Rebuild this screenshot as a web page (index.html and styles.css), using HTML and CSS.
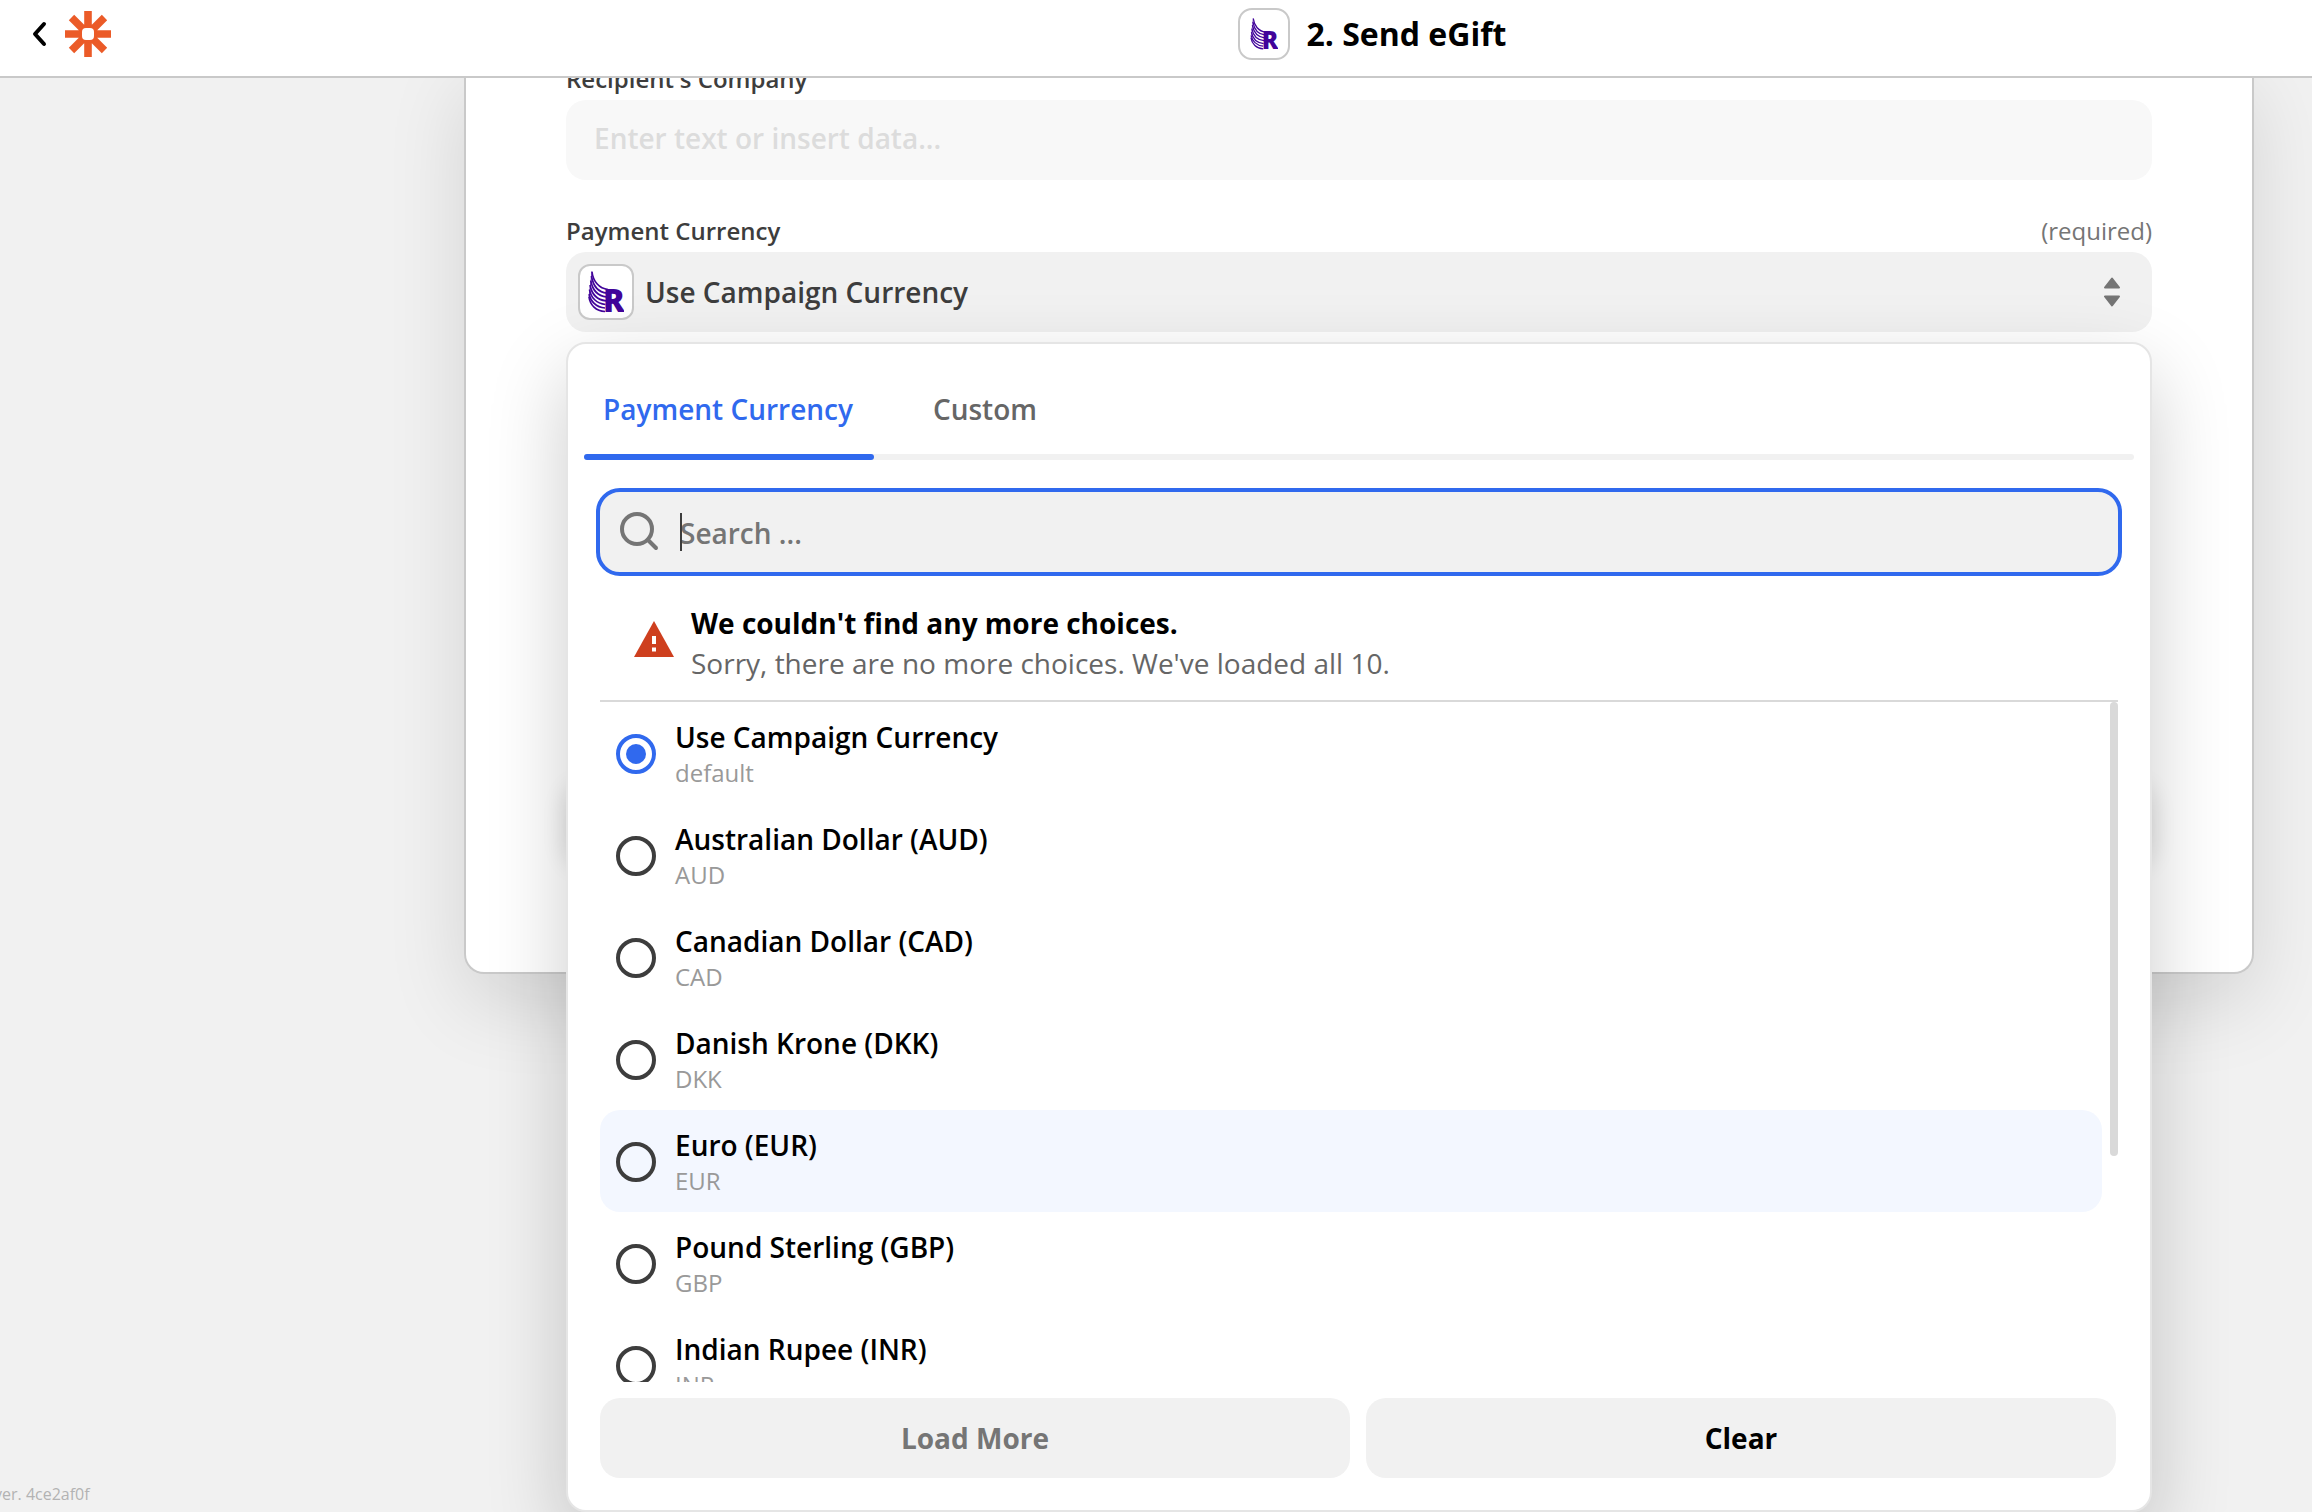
FILE: index.html
```html
<!DOCTYPE html>
<html lang="en">
<head>
    <meta charset="UTF-8">
    <meta name="viewport" content="width=device-width, initial-scale=1.0">
    <title>2. Send eGift</title>
    <link rel="stylesheet" href="styles.css">
</head>
<body>
    <!-- Shared logo -->
    <svg class="defs" aria-hidden="true">
        <symbol id="app-logo" viewBox="0 0 36 42">
            <g fill="none" stroke="#41049a" stroke-width="1.700">
                <path d="M4 1 C5 10 11 17.500 20 18.500"/>
                <path d="M3.400 5 C5 14 10 21.300 19 22.200"/>
                <path d="M2.700 9.500 C4.300 18 9 25 18.500 26"/>
                <path d="M2 14 C3.500 22 8 28.800 18 29.800"/>
                <path d="M1.500 18.500 C2.800 26 8 32.500 17.500 33.500"/>
                <path d="M1.200 23 C2.300 30 8 36.200 17 37"/>
                <path d="M1 26 C2 34 8 40 17 40.500"/>
            </g>
            <path d="M4 0 L3 10 L1 26" fill="none" stroke="#41049a" stroke-width=".800"/>
            <text class="logo-letter" x="15" y="41">R</text>
        </symbol>
    </svg>

    <header class="header">
        <div class="header-left">
            <a href="#" class="back-link" aria-label="Back">
                <svg width="16" height="26" viewBox="0 0 16 26"><path d="M13 3 L4 13 L13 23" fill="none" stroke="#000" stroke-width="4" stroke-linecap="round" stroke-linejoin="round"/></svg>
            </a>
            <a href="#" class="home-link" aria-label="Home">
                <svg width="46" height="46" viewBox="-23 -23 46 46">
                    <g stroke="#eb5b28" stroke-width="7.600">
                        <path d="M0 -23 V23 M-23 0 H23 M-16.500 -16.500 L16.500 16.500 M16.500 -16.500 L-16.500 16.500"/>
                    </g>
                    <circle r="9" fill="#eb5b28"/>
                    <rect x="-6" y="-6" width="12" height="12" rx="4" fill="#fff"/>
                </svg>
            </a>
        </div>
        <div class="header-title">
            <span class="app-icon"><svg class="app-logo"><use href="#app-logo"/></svg></span>
            <h1>2. Send eGift</h1>
        </div>
    </header>

    <div class="page">
        <aside class="sidebar">
            <p class="version">ver. 4ce2af0f</p>
        </aside>

        <main class="content">
            <form class="card">
                <div class="field">
                    <div class="field-label">
                        <label for="company">Recipient's Company</label>
                    </div>
                    <input type="text" id="company" class="text-input" placeholder="Enter text or insert data...">
                </div>

                <div class="field">
                    <div class="field-label">
                        <label for="currency">Payment Currency</label>
                        <span class="required">(required)</span>
                    </div>
                    <div class="select-box">
                        <span class="app-icon app-icon-large"><svg class="app-logo"><use href="#app-logo"/></svg></span>
                        <select id="currency">
                            <option>Use Campaign Currency</option>
                        </select>
                        <svg class="sort-icon" width="16" height="30" viewBox="0 0 16 30" fill="#757575" stroke="#757575" stroke-width="2" stroke-linejoin="round"><path d="M8 1.500 L15 10.500 H1 Z M1 19.500 H15 L8 28.500 Z"/></svg>
                    </div>

                    <!-- Dropdown menu -->
                    <div class="dropdown">
                        <div class="tabs" role="tablist">
                            <button type="button" class="tab active" role="tab" aria-selected="true">Payment Currency</button>
                            <button type="button" class="tab" role="tab" aria-selected="false">Custom</button>
                        </div>

                        <div class="search">
                            <svg width="40" height="40" viewBox="0 0 40 40" fill="none" stroke="#757575" stroke-width="4" stroke-linecap="round"><circle cx="17" cy="17" r="15"/><path d="M28 28 L36 36"/></svg>
                            <div class="search-box">
                                <input type="text" placeholder="Search ..." aria-label="Search">
                                <span class="caret"></span>
                            </div>
                        </div>

                        <div class="notice">
                            <svg width="40" height="36" viewBox="0 0 40 36"><path d="M20 0 L40 36 H0 Z" fill="#ce3f1e"/><path d="M20 15 V23 M20 26.500 V30.500" stroke="#fff" stroke-width="4"/></svg>
                            <div>
                                <p class="notice-title">We couldn't find any more choices.</p>
                                <p class="notice-text">Sorry, there are no more choices. We've loaded all 10.</p>
                            </div>
                        </div>

                        <div class="options">
                            <label class="option">
                                <input type="radio" name="choice" checked>
                                <span class="option-text"><span class="option-name">Use Campaign Currency</span><span class="option-code">default</span></span>
                            </label>
                            <label class="option">
                                <input type="radio" name="choice">
                                <span class="option-text"><span class="option-name">Australian Dollar (AUD)</span><span class="option-code">AUD</span></span>
                            </label>
                            <label class="option">
                                <input type="radio" name="choice">
                                <span class="option-text"><span class="option-name">Canadian Dollar (CAD)</span><span class="option-code">CAD</span></span>
                            </label>
                            <label class="option">
                                <input type="radio" name="choice">
                                <span class="option-text"><span class="option-name">Danish Krone (DKK)</span><span class="option-code">DKK</span></span>
                            </label>
                            <label class="option highlighted">
                                <input type="radio" name="choice">
                                <span class="option-text"><span class="option-name">Euro (EUR)</span><span class="option-code">EUR</span></span>
                            </label>
                            <label class="option">
                                <input type="radio" name="choice">
                                <span class="option-text"><span class="option-name">Pound Sterling (GBP)</span><span class="option-code">GBP</span></span>
                            </label>
                            <label class="option">
                                <input type="radio" name="choice">
                                <span class="option-text"><span class="option-name">Indian Rupee (INR)</span><span class="option-code">INR</span></span>
                            </label>
                            <div class="scroll-thumb"></div>
                        </div>

                        <div class="dropdown-actions">
                            <button type="button" class="action-btn" disabled>Load More</button>
                            <button type="button" class="action-btn">Clear</button>
                        </div>
                    </div>
                </div>

                <div class="card-footer"></div>
            </form>
        </main>
    </div>
</body>
</html>
```

FILE: styles.css
```css
/* Global Styling */
* {
    margin: 0;
    padding: 0;
    box-sizing: border-box;
}

body {
    display: flex;
    flex-direction: column;
    height: 100vh;
    overflow: hidden;
    background: #f1f1f1;
    color: #000;
    font-family: "Open Sans", "Noto Sans", sans-serif;
    font-size: 28px;
    line-height: 40px;
}

button, input, select {
    font: inherit;
    border: none;
    outline: none;
    background: none;
}

svg {
    display: block;
    flex: none;
}

.defs {
    position: absolute;
    width: 0;
    height: 0;
}

/* Header */
.header {
    display: flex;
    align-items: center;
    flex: none;
    height: 78px;
    padding-bottom: 8px;
    background: #fff;
    border-bottom: 2px solid #c9c9c9;
}

.header-left {
    display: flex;
    align-items: center;
    gap: 18px;
    width: 432px;
    padding-left: 31px;
}

.header-title {
    display: flex;
    flex: 1;
    align-items: center;
    justify-content: center;
    gap: 17px;
}

.header-title h1 {
    font-size: 32px;
    font-weight: 700;
}

.app-icon {
    display: flex;
    align-items: center;
    justify-content: center;
    flex: none;
    width: 52px;
    height: 52px;
    background: #fff;
    border: 2px solid #c9c9c9;
    border-radius: 14px;
}

.app-logo {
    width: 28px;
    height: 32px;
}

.app-icon-large {
    width: 56px;
    height: 56px;
    border-radius: 12px;
}

.app-icon-large .app-logo {
    width: 36px;
    height: 42px;
}

.logo-letter {
    font-family: "Open Sans", sans-serif;
    font-size: 32px;
    font-weight: 800;
    fill: #41049a;
}

/* Page */
.page {
    display: flex;
    flex: 1;
    min-height: 0;
    overflow: hidden;
}

.sidebar {
    display: flex;
    align-items: flex-end;
    width: 432px;
}

.version {
    margin-left: -6px;
    padding-bottom: 6px;
    color: #b3b3b3;
    font-size: 16px;
    line-height: 24px;
}

.content {
    flex: 1;
    padding: 0 58px 0 32px;
}

/* Card, scrolled partly under the header */
.card {
    margin-top: -18px;
    padding: 0 100px 108px;
    background: #fff;
    border: 2px solid #c9c9c9;
    border-top: none;
    border-radius: 0 0 20px 20px;
    box-shadow: 0 30px 80px rgba(0, 0, 0, 0.12);
}

.card-footer {
    height: 80px;
    margin-top: 452px;
    border-radius: 20px;
    box-shadow: 0 2px 24px rgba(0, 0, 0, 0.14);
}

/* Fields */
.field {
    position: relative;
}

.field + .field {
    margin-top: 32px;
}

.field-label {
    display: flex;
    justify-content: space-between;
    padding: 1px 0 3px;
    color: #3d3d3d;
    font-size: 24px;
    font-weight: 600;
    line-height: 36px;
}

.required {
    color: #757575;
    font-weight: 400;
}

.text-input {
    display: block;
    width: 100%;
    height: 80px;
    padding: 0 28px 4px;
    background: #f8f8f8;
    border-radius: 20px;
    font-weight: 600;
}

.text-input::placeholder {
    color: #dcdcdc;
}

.select-box {
    display: flex;
    align-items: center;
    gap: 11px;
    height: 80px;
    padding: 0 32px 0 12px;
    background: #f1f1f1;
    border-radius: 20px;
}

.select-box select {
    flex: 1;
    appearance: none;
    color: #3d3d3d;
    font-weight: 600;
}

/* Dropdown */
.dropdown {
    position: absolute;
    top: 100%;
    left: 0;
    right: 0;
    z-index: 1;
    margin-top: 10px;
    background: #fff;
    border: 2px solid #e5e5e5;
    border-radius: 20px;
    box-shadow: 0 30px 80px rgba(0, 0, 0, 0.2);
}

.tabs {
    position: relative;
    display: flex;
    gap: 40px;
    margin: 0 16px;
}

.tabs::after, .tab.active::after {
    content: "";
    position: absolute;
    left: 0;
    right: 0;
    bottom: 0;
    height: 6px;
    border-radius: 3px;
    background: #f1f1f1;
}

.tab {
    position: relative;
    padding: 45px 21px 31px 19px;
    color: #666;
    font-weight: 600;
}

.tab.active {
    color: #3069ee;
}

.tab.active::after {
    z-index: 1;
    background: #3069ee;
}

/* Search */
.search {
    display: flex;
    align-items: center;
    gap: 20px;
    height: 88px;
    margin: 28px 28px 0;
    padding: 0 20px;
    background: #f1f1f1;
    border: 4px solid #3069ee;
    border-radius: 24px;
}

.search-box {
    position: relative;
    flex: 1;
}

.search-box input {
    display: block;
    width: 100%;
    height: 40px;
    padding-top: 2px;
    font-weight: 600;
}

.search-box input::placeholder {
    color: #757575;
}

.caret {
    position: absolute;
    top: 1px;
    left: 0;
    width: 2px;
    height: 38px;
    background: #3d3d3d;
}

/* Notice */
.notice {
    display: flex;
    align-items: center;
    gap: 17px;
    margin: 0 32px;
    padding: 27px 34px 17px;
    border-bottom: 2px solid #d9d9d9;
}

.notice svg {
    margin-bottom: 8px;
}

.notice-title {
    font-weight: 700;
}

.notice-text {
    color: #666;
}

/* Options */
.options {
    position: relative;
    height: 680px;
    margin: 0 32px;
    padding-right: 16px;
    overflow: hidden;
}

.option {
    display: flex;
    align-items: center;
    gap: 19px;
    height: 102px;
    padding: 2px 16px 0;
    border-radius: 20px;
}

.option.highlighted {
    background: #f3f7ff;
}

.option input {
    appearance: none;
    flex: none;
    width: 40px;
    height: 40px;
    border: 4px solid #3d3d3d;
    border-radius: 50%;
    background: #fff;
}

.option.highlighted input {
    background: none;
}

.option input:checked {
    padding: 6px;
    border-color: #3069ee;
    background: #3069ee content-box;
}

.option-text {
    padding-top: 2px;
}

.option-name, .option-code {
    display: block;
    line-height: 36px;
}

.option-name {
    font-weight: 600;
}

.option-code {
    color: #999;
    font-size: 24px;
}

.scroll-thumb {
    position: absolute;
    top: 0;
    right: 0;
    width: 8px;
    height: 454px;
    border-radius: 4px;
    background: #d9d9d9;
}

/* Buttons */
.dropdown-actions {
    display: flex;
    gap: 16px;
    padding: 16px 34px 32px 32px;
}

.action-btn {
    flex: 1;
    height: 80px;
    border-radius: 20px;
    background: #f1f1f1;
    color: #000;
    font-weight: 700;
}

.action-btn:disabled {
    color: #757575;
}
```
